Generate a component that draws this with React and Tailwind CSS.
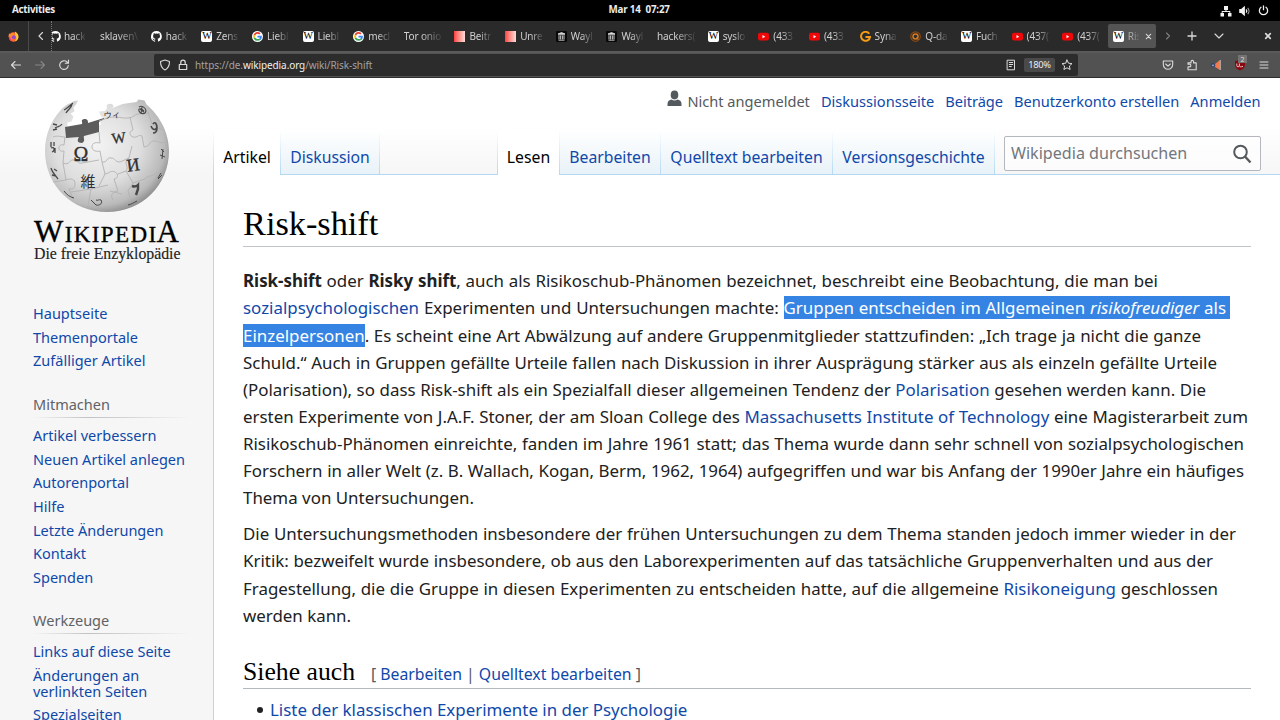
import React from "react";

const UI = "font-['Noto_Sans',sans-serif]";

const GitHub = () => (
  <svg viewBox="0 0 16 16" className="size-[11px] shrink-0 fill-white">
    <path d="M8 0a8 8 0 0 0-2.5 15.6c.4.1.5-.2.5-.4v-1.5c-2.2.5-2.7-1-2.7-1-.4-.9-.9-1.200-.9-1.200-.7-.5.1-.5.1-.5.8.1 1.200.8 1.200.8.7 1.300 1.900.9 2.400.7.1-.5.3-.9.5-1.100-1.800-.2-3.600-.9-3.600-4 0-.9.3-1.600.8-2.100-.1-.2-.4-1 .1-2.100 0 0 .7-.2 2.200.8a7.600 7.600 0 0 1 4 0c1.500-1 2.200-.8 2.200-.8.4 1.100.2 1.900.1 2.100.5.600.8 1.300.8 2.100 0 3.100-1.900 3.700-3.700 3.900.3.3.600.8.600 1.500v2.200c0 .2.100.5.600.4A8 8 0 0 0 8 0z" />
  </svg>
);
const Wiki = () => (
  <span className="flex size-[11px] shrink-0 items-center justify-center rounded-[2px] bg-white font-['Liberation_Serif',serif] text-[10px] leading-none tracking-tighter text-black">W</span>
);
const Google = () => (
  <svg viewBox="0 0 48 48" className="size-[11px] shrink-0">
    <circle cx="24" cy="24" r="24" fill="#fff" />
    <path fill="#ea4335" d="M24 12c3 0 5.600 1 7.600 3l5.700-5.700A19 19 0 0 0 7 15.500l6.700 5.200C15.300 15.700 19.200 12 24 12z" />
    <path fill="#4285f4" d="M43 24.500c0-1.500-.1-2.900-.4-4H24v8h10.700a9 9 0 0 1-4 6l6.500 5C41 36 43 31 43 24.500z" />
    <path fill="#fbbc05" d="M13.700 27.600a11 11 0 0 1 0-7L7 15.500a19 19 0 0 0 0 17.300z" />
    <path fill="#34a853" d="M24 43c5.200 0 9.800-1.700 13.200-4.700l-6.500-5C29 34.500 26.800 35.200 24 35.200c-4.800 0-8.800-3.200-10.300-7.600L7 32.800A19 19 0 0 0 24 43z" />
  </svg>
);
const Red = () => <span className="size-[11px] shrink-0 bg-linear-to-r from-[#ff3b3f] to-[#ffd9d9]" />;
const Archive = () => (
  <svg viewBox="0 0 22 22" className="size-[11px] shrink-0">
    <rect width="22" height="22" rx="2" fill="#080808" />
    <path d="M4 6l7-3 7 3zM4 7.500h14M5 18.500h12" stroke="#d8d8d8" strokeWidth="1.600" fill="#d8d8d8" />
    <path d="M6 9v8M9.300 9v8M12.700 9v8M16 9v8" stroke="#d8d8d8" strokeWidth="1.900" />
  </svg>
);
const YouTube = () => (
  <svg viewBox="0 0 22 22" className="size-[11px] shrink-0">
    <rect y="3.500" width="22" height="15.500" rx="4" fill="#f00808" />
    <path d="M9 8v6.500l5.500-3.250z" fill="#fff" />
  </svg>
);
const OrangeG = () => (
  <svg viewBox="0 0 22 22" className="size-[11px] shrink-0" fill="none" stroke="#f39a16" strokeWidth="4">
    <path d="M18.500 5.500A9 9 0 1 0 20 12H11" />
  </svg>
);
const QIcon = () => (
  <svg viewBox="0 0 22 22" className="size-[11px] shrink-0" fill="none">
    <circle cx="11" cy="11" r="9.500" stroke="#8a4610" strokeWidth="2.500" />
    <circle cx="11" cy="11" r="5" stroke="#d8781c" strokeWidth="3" />
    <path d="M13 13l4 5" stroke="#d8781c" strokeWidth="2" />
  </svg>
);

const TABS = [
  [null, "sklaven\\"],
  [GitHub, "hack"],
  [Wiki, "Zens"],
  [Google, "Liebl"],
  [Wiki, "Liebl"],
  [Google, "mecl"],
  [null, "Tor onio"],
  [Red, "Beitr"],
  [Red, "Unre"],
  [Archive, "Wayl"],
  [Archive, "Wayl"],
  [null, "hackers("],
  [Wiki, "syslo"],
  [YouTube, "(433"],
  [YouTube, "(433"],
  [OrangeG, "Syna"],
  [QIcon, "Q-da"],
  [Wiki, "Fuch"],
  [YouTube, "(437("],
  [YouTube, "(437("],
];

const FADE = "whitespace-nowrap [mask-image:linear-gradient(to_right,#000_45%,rgba(0,0,0,0.12)_100%)]";

function Tab({ Icon, label }) {
  return (
    <div className="flex w-[50.65px] shrink-0 items-center gap-[4px]">
      {Icon && <Icon />}
      <span className={FADE}>{label}</span>
    </div>
  );
}

function TopBar() {
  return (
    <div className="flex h-[21px] items-center bg-black text-[9.8px] font-bold text-[#ececec]">
      <div className="w-[608.500px] pl-[12px] tracking-[-0.25px]">Activities</div>
      <div className="flex gap-[5px] tracking-[-0.2px]"><span>Mar 14</span><span>07:27</span></div>
      <div className="ml-auto flex items-center gap-[7px] pr-[11px]">
        <svg viewBox="0 0 12 12" className="size-[12px]" fill="#f2f2f2">
          <path d="M4 1h4v4H4zM0.500 8h3.500v3.500H.5zM8 8h3.500v3.500H8zM5.500 5h1v1.500h-1zM1.700 6h8.600v2H9.400V7H2.600v1h-.9z" />
        </svg>
        <svg viewBox="0 0 12 12" className="size-[12px]" fill="none" stroke="#f2f2f2" strokeWidth="1.100">
          <path d="M.8 4.500h1.700L5.300 2v8L2.500 7.500H.8z" fill="#f2f2f2" />
          <path d="M7 4.300a2.500 2.500 0 0 1 0 3.400" />
          <path d="M8.700 2.800a4.700 4.700 0 0 1 0 6.400" stroke="#aaa" />
        </svg>
        <svg viewBox="0 0 12 12" className="size-[11px]" fill="none" stroke="#f2f2f2" strokeWidth="1.400" strokeLinecap="round">
          <path d="M3.300 2.500a4.500 4.500 0 1 0 5.400 0M6 .9v4.200" />
        </svg>
      </div>
    </div>
  );
}

const S = ({ d, className = "", w = 1.1, c = "#dadada", children }) => (
  <svg viewBox="0 0 12 12" className={`size-[12px] shrink-0 ${className}`} fill="none" stroke={c} strokeWidth={w} strokeLinecap="round" strokeLinejoin="round">
    <path d={d} />
    {children}
  </svg>
);

function TabStrip() {
  return (
    <div className="flex h-[30px] items-center bg-[#2a2a2a] text-[10px] tracking-[-0.15px] text-[#d0d0d0]">
      <div className="flex h-full w-[29px] items-center border-r border-[#4a4a4a] pl-[8px]">
        <svg viewBox="0 0 22 22" className="size-[11px]">
          <circle cx="11" cy="12" r="9.500" fill="#ff6a2b" />
          <path d="M14 1c4 2 7.500 6 7 11.500A10 10 0 0 1 13 21c4-3 5-9 1-13z" fill="#ffc53a" />
          <path d="M2 5l4 1 4-3 3 5 3 5-5 4-6-1-4-5z" fill="#ff8a2a" />
          <circle cx="11.500" cy="12.500" r="4" fill="#9a48c8" />
          <path d="M1.500 11C2 18 8 22 13 21c-5 0-8-3-8-8z" fill="#f7387d" />
        </svg>
      </div>
      <div className="flex h-full w-[23px] items-center border-r border-dotted border-[#777] pl-[6px]">
        <S d="M7.500 2.500L4 6l3.500 3.500" />
      </div>
      <div className="flex h-full w-[48px] items-center gap-[3px]">
        <div className="flex w-[9px] shrink-0 justify-end overflow-hidden"><GitHub /></div>
        <span className={FADE}>hack</span>
      </div>
      {TABS.map(([Icon, label], i) => <Tab key={i} Icon={Icon} label={label} />)}
      <div className="-ml-[5px] flex h-[24px] w-[48px] shrink-0 items-center gap-[4px] rounded-[2px] bg-[#545454] pl-[5px]">
        <Wiki />
        <span className={`${FADE} w-[11px] text-[#a8a8a8]`}>Ris</span>
        <S d="M3.500 3.500l5 5M8.500 3.500l-5 5" className="!size-[11px]" />
      </div>
      <S d="M4.500 3L7.500 6l-3 3" c="#808080" className="ml-[6px]" />
      <S d="M6 2v8M2 6h8" className="ml-[12px]" w={1.3} />
      <S d="M2 4l4 4 4-4" className="ml-[15px]" />
      <S d="M3.700 3.700l4.600 4.600M8.300 3.700l-4.600 4.600" className="mr-[6px] ml-auto" w={1.7} />
    </div>
  );
}

function NavBar() {
  return (
    <div className="flex h-[27px] items-center border-t-2 border-b border-t-[#5a5a5a] border-b-[#2e2e2e] bg-[#525252] text-[10px]">
      <S d="M10.500 6h-9M5 2.500L1.500 6 5 9.500" className="ml-[10px]" />
      <S d="M1.500 6h9M7 2.500L10.500 6 7 9.500" c="#858585" className="ml-[12px]" />
      <S d="M10.300 6.500A4.300 4.300 0 1 1 9 3l1.300 1M10.500 1v3.200H7.300" className="ml-[12px]" />
      <div className="ml-[84px] flex h-[22px] w-[924px] items-center rounded-[2px] bg-[#2c2c2c] pl-[5px]">
        <S d="M6 1l4.500 1.500c0 4-1 6.800-4.500 8.500C2.500 9.300 1.500 6.500 1.500 2.500z" w={1.1} />
        <S d="M2.300 5.500h7.400v5H2.300zM3.800 5.500V3.400a2.200 2.200 0 0 1 4.400 0v2.100" className="ml-[6px]" w={1.2} />
        <span className="ml-[6px] tracking-[-0.09px] whitespace-nowrap text-[#a2a2a2]">
          https://de.<span className="text-[#f0f0f0]">wikipedia.org</span>/wiki/Risk-shift
        </span>
        <S d="M2.500 1.200h7v9.600h-7zM4.300 3.500h3.400M4.300 5.500h3.400M4.300 7.500h2" className="ml-auto" w={1} />
        <span className="ml-[7px] flex h-[14px] w-[31px] items-center justify-center rounded-[2px] bg-[#4a4a4a] text-[9.300px] tracking-[-0.3px] text-[#eee]">180%</span>
        <S d="M6 1l1.500 3.200 3.500.4-2.600 2.400.7 3.500L6 8.800l-3.100 1.700.7-3.500L1 4.600l3.500-.4z" className="mr-[5px] ml-[6px]" w={1} />
      </div>
      <S d="M1.300 2h9.400v3.500a4.700 4.700 0 0 1-9.400 0zM3.700 5L6 7.200 8.300 5" className="ml-[84px]" />
      <S d="M2 10.700V7.900h1.600a1.300 1.300 0 0 0 0-2.600H2V3.900h3V2.700a1.300 1.300 0 0 1 2.600 0v1.200h2.600v6.800z" className="ml-[12px]" />
      <svg viewBox="0 0 12 12" className="ml-[12px] size-[12px]">
        <path d="M10 1v10L5 8V5z" fill="#f07a4c" /><circle cx="3" cy="6.300" r="2.300" fill="#34466e" /><circle cx="3" cy="6.300" r=".9" fill="#aeb6c8" /><path d="M10.300 1v10" stroke="#c9b5aa" />
      </svg>
      <div className="relative ml-[12px] size-[12px]">
        <svg viewBox="0 0 12 12" className="size-[12px]">
          <path d="M1 2l5-1 5 1v3.500C11 8.500 9 10.500 6 11.500 3 10.500 1 8.500 1 5.500z" fill="#8a0710" />
          <path d="M2.800 4.500v2a1.300 1.300 0 0 0 2.600 0v-2M5.400 6.500c0 1 .8 1.500 2 1.300l1.600-.5" stroke="#e8c8c8" fill="none" />
        </svg>
        <span className="absolute -top-[4px] left-[4px] flex h-[8px] w-[9px] items-center justify-center bg-[#737373] text-[7px] leading-none text-[#ddd]">2</span>
      </div>
      <S d="M2 3h8M2 6h8M2 9h8" className="ml-[12px]" w={1} />
    </div>
  );
}

function Globe() {
  return (
    <svg viewBox="40 95 135 120" className="ml-[40px] h-[120px] w-[135px]">
      <defs>
        <radialGradient id="ball" cx="0.42" cy="0.4" r="0.64">
          <stop offset="0" stopColor="#f3f3f3" />
          <stop offset="0.55" stopColor="#dedede" />
          <stop offset="0.85" stopColor="#bababa" />
          <stop offset="1" stopColor="#858585" />
        </radialGradient>
      </defs>
      <path d="M60 111c3-4 7-7 11-8l3-2 4-.5-2 4-2.500 3 1 4-4 2 3 3-2 5-4 1-.500 10 12-1 22-7-1-5 5-1-4-2-2-5 6-.5 2-3-.5-2c1-3 6-3 7 0l-1 2 10-4 14-2 2-2.500 6 1 2 4C158 114 169 131 169 151c0 34-27 61-62 61s-62-27-62-61c0-16 6-30 15-40z" fill="url(#ball)" />
      <path d="M65 127l17-3c1-2-2-4 2-5 4 0 4 2 4 4l16-5v1l-5 3v10l-15 4c-1 2 2 5-2 7-5 0-5-3-3-6l-13 1z" fill="#5c5c5c" />
      <g fill="none" stroke="#b2b2b2" strokeWidth="0.9">
        <path d="M53 137c4-2 8 0 12 0l-1 8c-3-1-6 1-5 4s4 2 5 2l-1 12c7 3 6-4 11-3 4 0 3 4 8 3l17-3" />
        <path d="M99 132l1 11c-5-1-8 0-8 4s5 5 8 4l2 11c6 1 4-5 9-4 5 0 3 4 9 4l9-4 3-12" />
        <path d="M99 121c7-2 8-4 15-4s14 3 20-1c4-4 10-1 14-3M130 117l3 13c-5 2-3 6 0 7 5 1 5-3 9-1l2 11" />
        <path d="M144 147c7-1 5-6 10-6s6 3 12 1M102 162l3 12c5-1 6-4 10-2s3 7-1 7l4 12c-6 1-8 4-5 9M63 163l3 17c5-2 9-1 9 4s-3 5-6 5l4 10" />
        <path d="M66 180l-13 2M71 192l20-3 17-4M105 174l-6 12M129 158c-7 5 1 8-3 13l-8 3M126 171l7 12-5 8 3 10M133 183l12-4c4-5 8-1 12-7M148 112l4 12 10 6M110 191l12 3M91 189l-3 17" />
      </g>
      <g fill="#303030" className="font-['Liberation_Serif','Noto_Sans_CJK_JP',serif]" textAnchor="middle">
        <text x="81" y="160.500" fontSize="20" stroke="#303030" strokeWidth="0.3">Ω</text>
        <text x="119" y="143" fontSize="15" transform="rotate(-7 119 140)" stroke="#303030" strokeWidth="0.3">W</text>
        <text x="133" y="171" fontSize="18" transform="rotate(-8 133 165)" stroke="#303030" strokeWidth="0.3">И</text>
        <text x="88" y="186.500" fontSize="15">維</text>
        <text x="112" y="118" fontSize="8.500" transform="rotate(-5 112 114)">ウィ</text>
      </g>
      <g fill="none" stroke="#484848" strokeWidth="1.300">
        <path d="M132 186c3 1 5 0 6-1v4l-2 6" strokeWidth="2.400" />
        <path d="M151 126c2 5 5 4 6 1m-4-3c2-3 4 0 4 4s-2 5-4 5" strokeWidth="1.600" />
        <path d="M64 110c3-1 6-5 9-7m-7 10c3-5 5-4 6-9M53 124l4 1m-2 3c3-2 5-1 7-4m-5 5l-4 1" />
        <path d="M51 142v5m3-5v4m-3 2c4-2 4 3 1 4m3-4v5M51 168c1 4 4 7 7 11m-4-10l3 2m-5 4l4 1" />
        <path d="M91 200l5 5c4 1 7-2 5-5-2-1-3 1-5 0M128 205c4-1 5-2 9-4M64 191c3 4 6 6 10 7M161 149l3 3m-4 3l5 2m-2-8l-1 10M158 178l3-5m-3 6l4-4" strokeWidth="1" />
        <path d="M139 107c3-2 7 1 7 4-1 4-6 3-7 0s2-3 5 0m-4-2l4 3m-2-5l-1 7" strokeWidth="1.100" />
      </g>
    </svg>
  );
}

const SideLink = ({ children, tight }) => (
  <li className={`${tight ? "leading-[16.400px] py-[3.500px]" : "leading-[23.650px]"}`}>{children}</li>
);
const SideHead = ({ children }) => (
  <div>
    <h3 className="h-[22px] leading-[19px] text-[#606266]">{children}</h3>
    <div className="h-px w-[158px] bg-linear-to-r from-transparent via-[#bfc1c4] via-35% to-transparent" />
  </div>
);

function Sidebar() {
  return (
    <aside className="w-[213px] shrink-0">
      <div className="h-[207px] pt-[17px]">
        <Globe />
        <div className="ml-[34px] flex h-[27px] w-[145px] items-baseline justify-between font-['Liberation_Serif',serif] leading-[34px] whitespace-nowrap text-black [-webkit-text-stroke:0.35px_#000]">
          <span className="text-[31px]">W</span>
          {"IKIPEDI".split("").map((c, i) => <span key={i} className="text-[23px]">{c}</span>)}
          <span className="-ml-[1px] text-[31px]">A</span>
        </div>
        <div className="ml-[34px] w-[145px] pt-[1px] font-['Liberation_Serif',serif] text-[15.800px] leading-[22px] whitespace-nowrap text-[#222] [-webkit-text-stroke:0.15px_#222] [text-align-last:justify]">Die freie Enzyklopädie</div>
      </div>
      <div className="pt-[17px] pl-[33px] text-[14.520px] text-[#0f48a9]">
        <ul>
          <SideLink>Hauptseite</SideLink>
          <SideLink>Themenportale</SideLink>
          <SideLink>Zufälliger Artikel</SideLink>
        </ul>
        <div className="h-[22px]" />
        <SideHead>Mitmachen</SideHead>
        <ul className="pt-[6px]">
          {["Artikel verbessern", "Neuen Artikel anlegen", "Autorenportal", "Hilfe", "Letzte Änderungen", "Kontakt", "Spenden"].map((t) => (
            <SideLink key={t}>{t}</SideLink>
          ))}
        </ul>
        <div className="h-[21px]" />
        <SideHead>Werkzeuge</SideHead>
        <ul className="pt-[6px]">
          <SideLink>Links auf diese Seite</SideLink>
          <SideLink tight>Änderungen an<br />verlinkten Seiten</SideLink>
          <SideLink>Spezialseiten</SideLink>
        </ul>
      </div>
    </aside>
  );
}

const EDGE = "w-px self-stretch bg-linear-to-b from-white to-[#b3d9f2]";
function NavTab({ w, active, children }) {
  return (
    <>
      <div className={`${w} ${active ? "z-10 bg-white" : "border-b border-[#b3d9f2] bg-linear-to-b from-white to-[#e8f2f8] text-[#0f48a9]"} flex justify-center pt-[16px] leading-[22px] whitespace-nowrap`}>{children}</div>
      <div className={EDGE} />
    </>
  );
}

const A = ({ children }) => <span className="text-[#0f48a9]">{children}</span>;
const Sel = ({ children, className = "" }) => <span className={`bg-[#3584e4] text-white ${className}`}>{children}</span>;
const L = ({ w, children }) => <div className={`${w} h-[27.120px] leading-[27.120px] whitespace-nowrap [text-align-last:justify]`}>{children}</div>;

function Article() {
  return (
    <main className="flex-1 overflow-hidden border-l border-[#b3d9f2] bg-white pt-[27px] pr-[29px] pl-[29px] text-[16.900px] text-[#202122]">
      <h1 className="h-[45px] border-b border-[#c0c4c9] font-['Liberation_Serif',serif] text-[34.300px] leading-[43px] text-black">Risk-shift</h1>
      <div className="pt-[20.300px]">
        <L w="w-[915px]"><b>Risk-shift</b> oder <b>Risky shift</b>, auch als Risikoschub-Phänomen bezeichnet, beschreibt eine Beobachtung, die man bei</L>
        <L w="w-[983px]"><A>sozialpsychologischen</A> Experimenten und Untersuchungen machte: <Sel className="mr-[-4px] pr-[4px]">Gruppen entscheiden im Allgemeinen <i>risikofreudiger</i> als</Sel></L>
        <L w="w-[958px]"><Sel>Einzelpersonen</Sel>. Es scheint eine Art Abwälzung auf andere Gruppenmitglieder stattzufinden: „Ich trage ja nicht die ganze</L>
        <L w="w-[974px]">Schuld.“ Auch in Gruppen gefällte Urteile fallen nach Diskussion in ihrer Ausprägung stärker aus als einzeln gefällte Urteile</L>
        <L w="w-[963px]">(Polarisation), so dass Risk-shift als ein Spezialfall dieser allgemeinen Tendenz der <A>Polarisation</A> gesehen werden kann. Die</L>
        <L w="w-[1005px]">ersten Experimente von J.A.F. Stoner, der am Sloan College des <A>Massachusetts Institute of Technology</A> eine Magisterarbeit zum</L>
        <L w="w-[1001px]">Risikoschub-Phänomen einreichte, fanden im Jahre 1961 statt; das Thema wurde dann sehr schnell von sozialpsychologischen</L>
        <L w="w-[1001px]">Forschern in aller Welt (z. B. Wallach, Kogan, Berm, 1962, 1964) aufgegriffen und war bis Anfang der 1990er Jahre ein häufiges</L>
        <L w="w-[231px]">Thema von Untersuchungen.</L>
      </div>
      <div className="pt-[9px]">
        <L w="w-[993px]">Die Untersuchungsmethoden insbesondere der frühen Untersuchungen zu dem Thema standen jedoch immer wieder in der</L>
        <L w="w-[970px]">Kritik: bezweifelt wurde insbesondere, ob aus den Laborexperimenten auf das tatsächliche Gruppenverhalten und aus der</L>
        <L w="w-[975px]">Fragestellung, die die Gruppe in diesen Experimenten zu entscheiden hatte, auf die allgemeine <A>Risikoneigung</A> geschlossen</L>
        <L w="w-[108px]">werden kann.</L>
      </div>
      <h2 className="mt-[28.500px] flex h-[32px] items-baseline border-b border-[#b4b9bf]">
        <span className="font-['Liberation_Serif',serif] text-[25.700px] leading-[30px] text-black">Siehe auch</span>
        <span className="ml-[16px] text-[15.800px] text-[#54595d]">[ <A>Bearbeiten</A> | <A>Quelltext bearbeiten</A> ]</span>
      </h2>
      <ul className="flex items-center pt-[8px] pl-[14px]">
        <li className="flex items-center gap-[7px] leading-[26px]"><span className="size-[6px] rounded-full bg-[#202122]" /><A>Liste der klassischen Experimente in der Psychologie</A></li>
      </ul>
    </main>
  );
}

export default function App() {
  return (
    <div className={`${UI} flex h-[720px] w-[1280px] flex-col overflow-hidden bg-white`}>
      <TopBar />
      <TabStrip />
      <NavBar />
      <div className="flex min-h-0 flex-1 bg-[#f6f6f6] bg-[linear-gradient(#fff_50%,#f6f6f6_100%)] bg-[length:100%_97px] bg-no-repeat">
        <Sidebar />
        <div className="flex w-[1067px] flex-col">
          <div className="flex h-[52px] items-start justify-end gap-[11px] pt-[12px] pr-[19.500px] text-[14.600px] leading-[23px] whitespace-nowrap text-[#0f48a9]">
            <span className="flex gap-[5px] text-[#54595d]">
              <svg viewBox="0 0 15 18" className="h-[18px] w-[15px]" fill="#54595d">
                <ellipse cx="7.500" cy="5" rx="3.800" ry="4.400" /><path d="M.5 16v-2c0-3 2-4 4-4.500 2 1.300 4 1.300 6 0 2 .5 4 1.500 4 4.500v2z" />
              </svg>
              Nicht angemeldet
            </span>
            <span>Diskussionsseite</span><span>Beiträge</span><span>Benutzerkonto erstellen</span><span>Anmelden</span>
          </div>
          <div className="flex h-[45px] text-[15.750px]">
            <div className={EDGE} />
            <NavTab w="w-[66px]" active>Artikel</NavTab>
            <NavTab w="w-[98px]">Diskussion</NavTab>
            <div className="w-[117px] border-b border-[#b3d9f2]" />
            <div className={EDGE} />
            <NavTab w="w-[61px]" active>Lesen</NavTab>
            <NavTab w="w-[100px]">Bearbeiten</NavTab>
            <NavTab w="w-[171px]">Quelltext bearbeiten</NavTab>
            <NavTab w="w-[161px]">Versionsgeschichte</NavTab>
            <div className="flex flex-1 border-b border-[#b3d9f2] pt-[6px] pl-[9px]">
              <div className="flex h-[35px] w-[257px] items-center justify-between rounded-[2px] border border-[#b4b7bd] bg-white/60 pr-[8px] pl-[6px] text-[16.100px] text-[#72777d]">
                Wikipedia durchsuchen
                <svg viewBox="0 0 20 20" className="size-[20px]" fill="none" stroke="#54595d" strokeWidth="2"><circle cx="8.500" cy="8" r="6.300" /><path d="M13 12.500l5.500 6" strokeWidth="2.400" /></svg>
              </div>
            </div>
          </div>
          <Article />
        </div>
      </div>
    </div>
  );
}
